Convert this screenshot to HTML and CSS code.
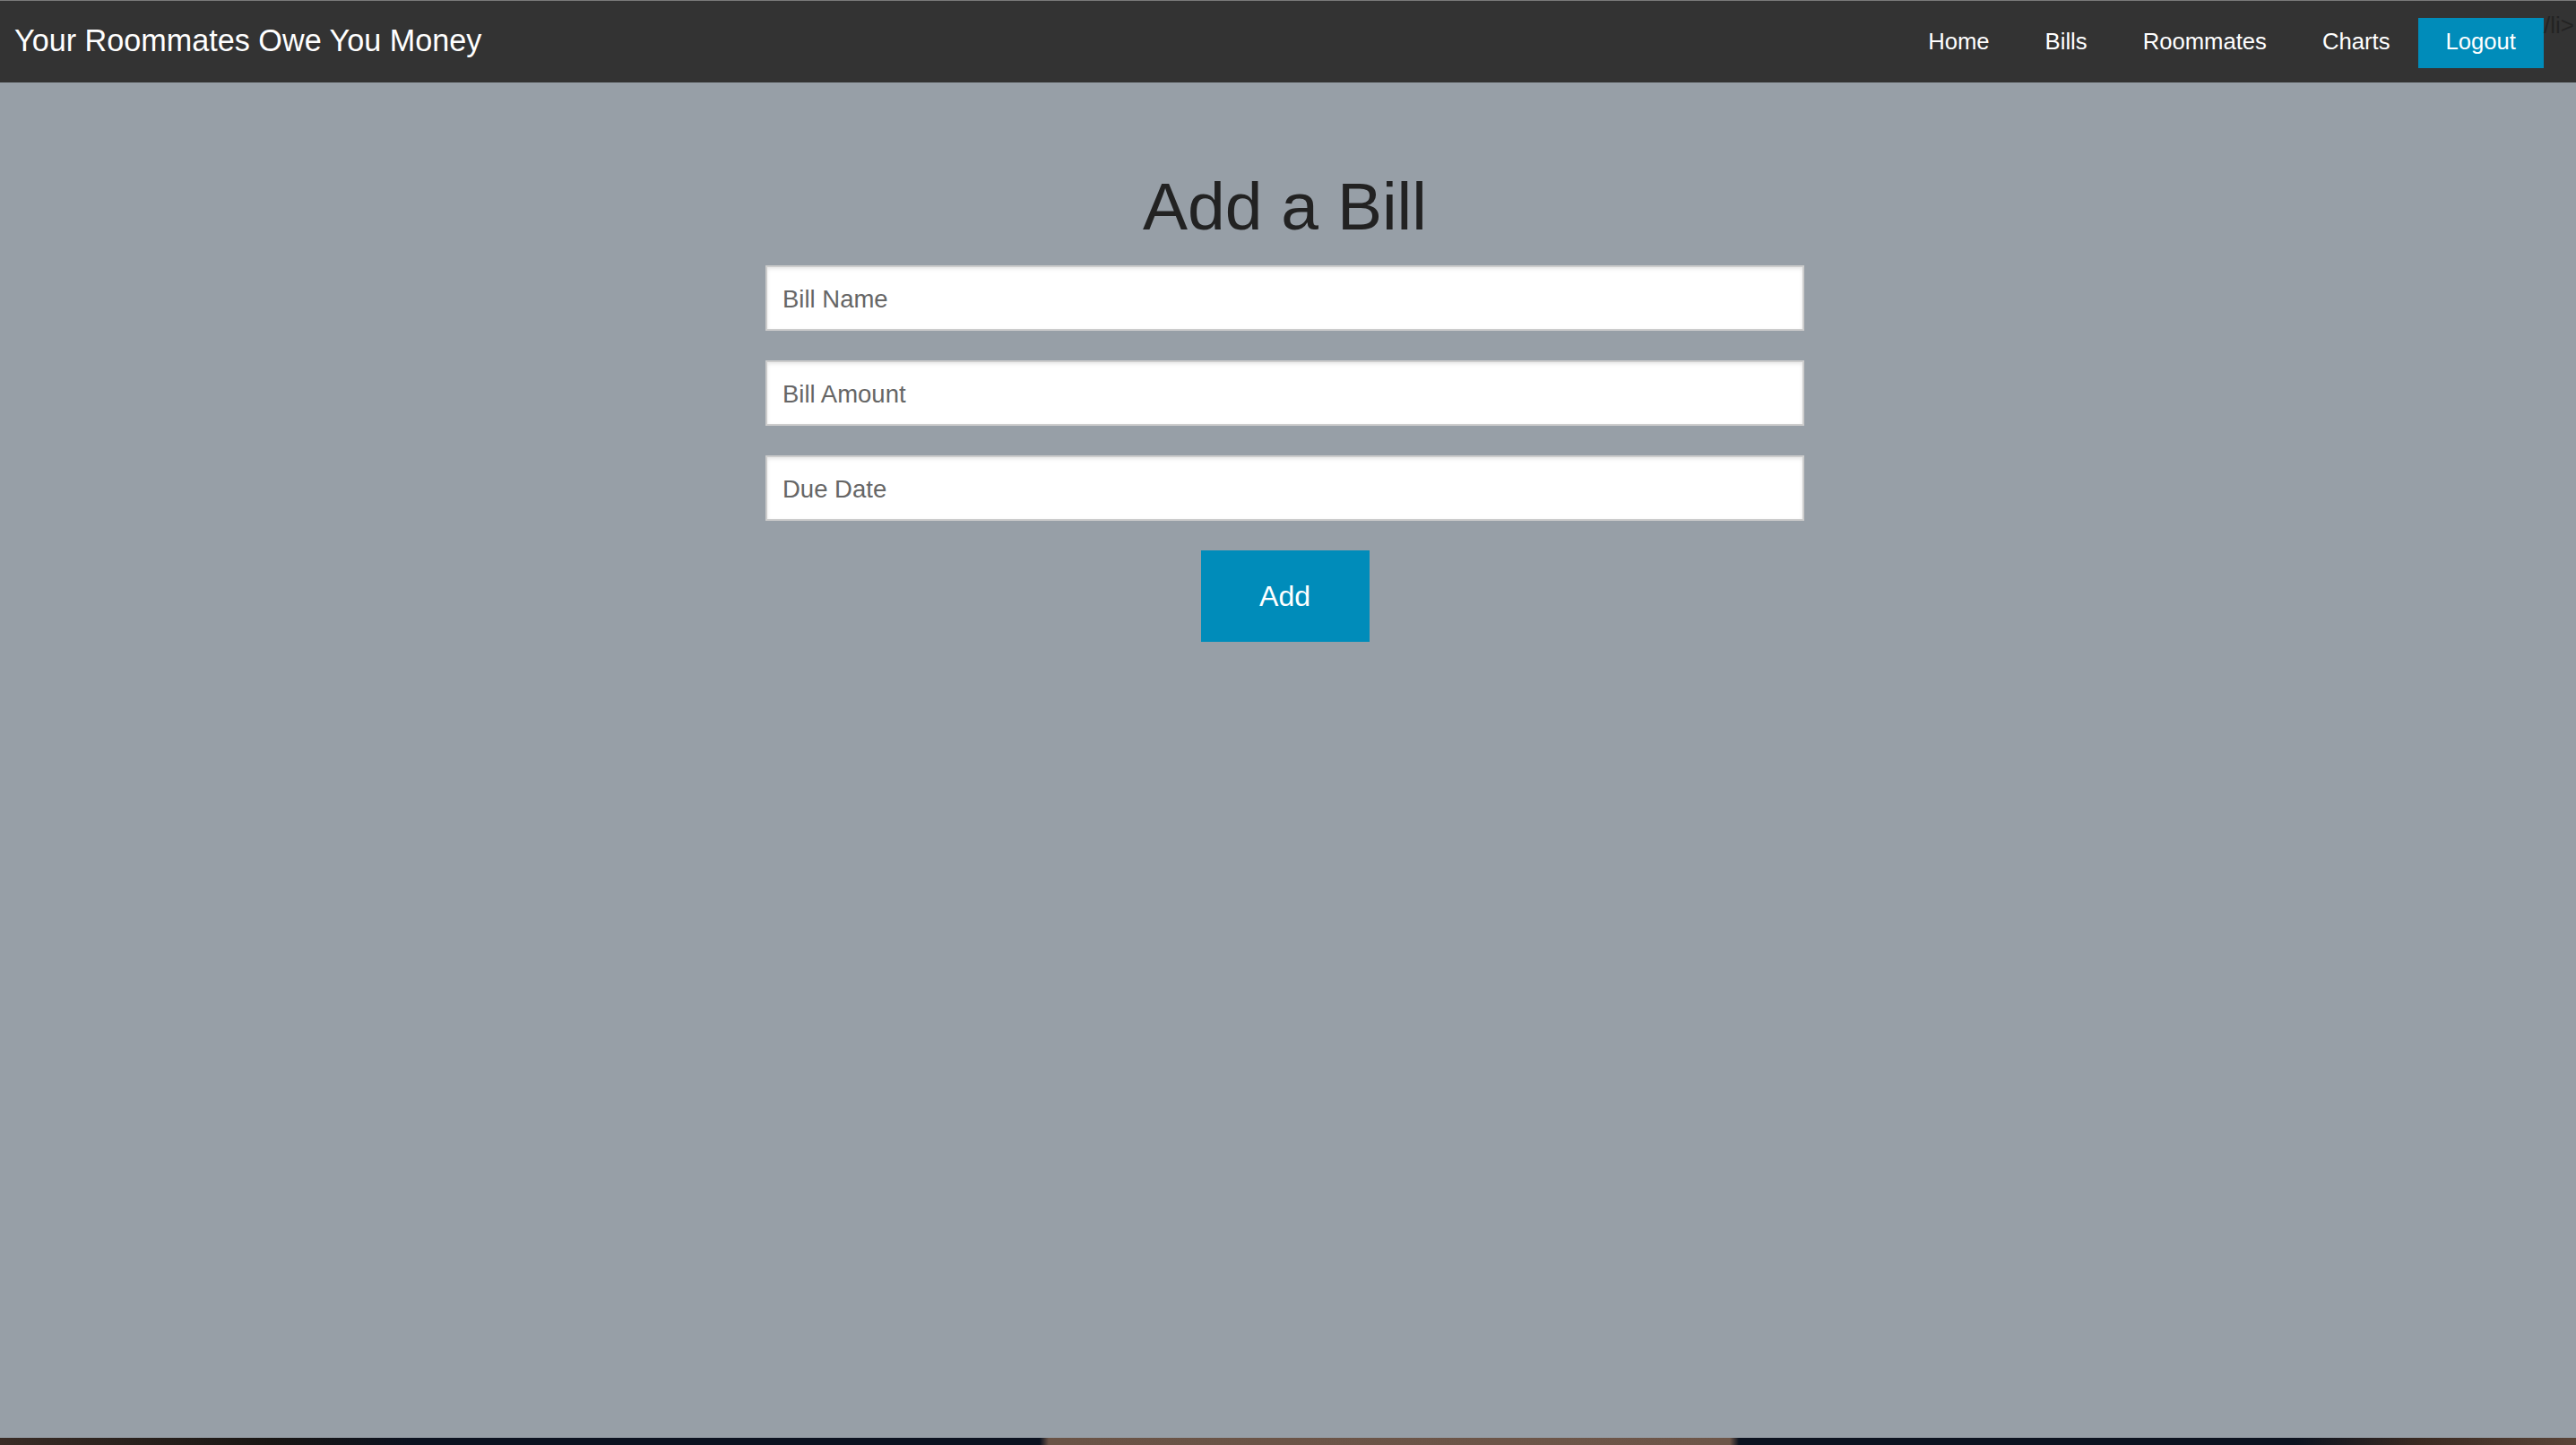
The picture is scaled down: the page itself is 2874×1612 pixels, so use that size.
FILE: index.html
```html
<!DOCTYPE html>
<html lang="en">
<head>
<meta charset="utf-8">
<title>Your Roommates Owe You Money</title>
<link rel="stylesheet" href="styles.css">
</head>
<body>
<div class="page">
  <nav class="topbar">
    <a class="brand" href="#">Your Roommates Owe You Money</a>
    <ul class="menu">
      <li><a href="#">Home</a></li>
      <li><a href="#">Bills</a></li>
      <li><a href="#">Roommates</a></li>
      <li><a href="#">Charts</a></li>
      <li><a class="logout" href="#">Logout</a></li>
    </ul>
    <span class="stray">/li&gt;</span>
  </nav>
  <main class="main">
    <form class="bill-form">
      <h1 class="title">Add a Bill</h1>
      <input class="field" type="text" placeholder="Bill Name">
      <input class="field" type="text" placeholder="Bill Amount">
      <input class="field" type="text" placeholder="Due Date">
      <button class="add-btn" type="button">Add</button>
    </form>
  </main>
  <div class="bottom-strip"></div>
</div>
</body>
</html>
```
FILE: styles.css
```css
html, body {
  margin: 0;
  padding: 0;
  height: 100%;
}
body {
  font-family: "Liberation Sans", Arial, Helvetica, sans-serif;
  background: #979fa7;
  overflow: hidden;
}
.page {
  display: flex;
  flex-direction: column;
  height: 100vh;
}
.topbar {
  position: relative;
  flex: 0 0 auto;
  height: 91px;
  border-top: 1px solid #7a7a7a;
  background: #333333;
  display: flex;
  justify-content: space-between;
  align-items: flex-start;
  padding-right: 36px;
}
.brand {
  display: block;
  padding-left: 16px;
  font-size: 34.2px;
  line-height: 89px;
  color: #ffffff;
  text-decoration: none;
  white-space: nowrap;
}
.menu {
  list-style: none;
  margin: 19px 0 0 0;
  padding: 0;
  display: flex;
}
.menu a {
  display: block;
  padding: 0 31px 4px 31px;
  font-size: 25.67px;
  line-height: 52px;
  color: #ffffff;
  text-decoration: none;
  white-space: nowrap;
}
.menu a.logout {
  background: #008cba;
}
.stray {
  position: absolute;
  left: 2838px;
  top: 12px;
  font-size: 26px;
  line-height: 30px;
  color: #232323;
  white-space: nowrap;
}
.main {
  flex: 1 1 auto;
  padding: 97px 7px 0 0;
}
.bill-form {
  width: 1159px;
  margin: 0 auto;
  display: flex;
  flex-direction: column;
  align-items: center;
}
.title {
  margin: 0 0 25px 0;
  font-size: 75px;
  line-height: 82px;
  font-weight: normal;
  color: #222222;
  text-align: center;
}
.field {
  box-sizing: border-box;
  width: 100%;
  height: 73px;
  margin: 0 0 33px 0;
  padding: 3px 15px 0 17px;
  border: 2px solid #cccccc;
  background: #ffffff;
  box-shadow: inset 0 2px 4px rgba(0, 0, 0, 0.1);
  font-family: "Liberation Sans", Arial, Helvetica, sans-serif;
  font-size: 27.5px;
  color: #222222;
  outline: none;
}
.field::placeholder {
  color: #666666;
  opacity: 1;
}
.add-btn {
  width: 188px;
  height: 102px;
  padding: 0;
  border: none;
  background: #008cba;
  color: #ffffff;
  font-family: "Liberation Sans", Arial, Helvetica, sans-serif;
  font-size: 32px;
  line-height: 102px;
  cursor: pointer;
}
.bottom-strip {
  flex: 0 0 8px;
  background: linear-gradient(to right,
    #3a2c26 0px, #1a1614 300px, #0c1220 460px,
    #0c1220 1160px, #6a5346 1170px, #6e5649 1930px,
    #0d1320 1940px, #0d1320 2560px, #3b2a22 2700px, #5a4438 2874px);
}
```
